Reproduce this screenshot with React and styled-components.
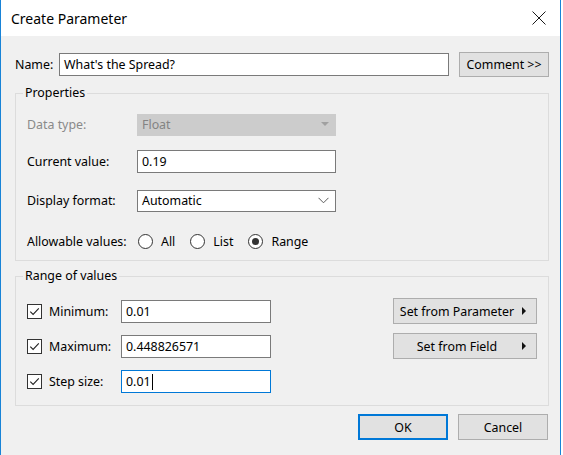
import React from "react"
import styled, { createGlobalStyle } from "styled-components"

const Global = createGlobalStyle`
  html, body { margin: 0; padding: 0; background: #ffffff; }
  body { font-family: "Noto Sans", "Open Sans", sans-serif; font-size: 12.4px; color: #000; }
  * { box-sizing: border-box; }
`

export default function App() {
  return (
    <>
      <Global />
      <Window>
        <TitleBar>
          <Title>Create Parameter</Title>
          <CloseBtn>
            <svg width="16" height="16" viewBox="0 0 16 16">
              <path d="M1.5 1.5 L14.5 14.5 M14.5 1.5 L1.5 14.5" stroke="#1a1a1a" strokeWidth="1" fill="none" />
            </svg>
          </CloseBtn>
        </TitleBar>

        <Body>
          <NameRow>
            <NameLabel>Name:</NameLabel>
            <TextBox $width={390}>What's the Spread?</TextBox>
            <Button $width={90} $height={25}>Comment &gt;&gt;</Button>
          </NameRow>

          <Group $pt={12} $pb={7}>
            <Legend>Properties</Legend>
            <FieldRow>
              <FieldLabel $disabled>Data type:</FieldLabel>
              <Select $disabled>
                Float
                <svg width="8" height="5" viewBox="0 0 8 5">
                  <path d="M0 0 L8 0 L4 4 Z" fill="#a0a0a0" />
                </svg>
              </Select>
            </FieldRow>
            <FieldRow $mt={14}>
              <FieldLabel>Current value:</FieldLabel>
              <TextBox $width={199}>0.19</TextBox>
            </FieldRow>
            <FieldRow $mt={16}>
              <FieldLabel>Display format:</FieldLabel>
              <Select>
                Automatic
                <svg width="11" height="7" viewBox="0 0 11 7">
                  <path d="M0.5 0.8 L5.5 5.8 L10.5 0.8" stroke="#5a5a5a" strokeWidth="1" fill="none" />
                </svg>
              </Select>
            </FieldRow>
            <FieldRow $mt={18}>
              <FieldLabel>Allowable values:</FieldLabel>
              <Radios>
                <RadioItem><Radio /> All</RadioItem>
                <RadioItem><Radio /> List</RadioItem>
                <RadioItem><Radio $checked /> Range</RadioItem>
              </Radios>
            </FieldRow>
          </Group>

          <Group $pt={16} $pb={12} $mt={7}>
            <Legend>Range of values</Legend>
            <RangeBody>
              <RangeRows>
                <CheckRow>
                  <CheckBox />
                  <CheckLabel>Minimum:</CheckLabel>
                  <TextBox $width={150}>0.01</TextBox>
                </CheckRow>
                <CheckRow>
                  <CheckBox />
                  <CheckLabel>Maximum:</CheckLabel>
                  <TextBox $width={150}>0.448826571</TextBox>
                </CheckRow>
                <CheckRow>
                  <CheckBox />
                  <CheckLabel>Step size:</CheckLabel>
                  <TextBox $width={150} $focused>0.01<Caret /></TextBox>
                </CheckRow>
              </RangeRows>
              <SideButtons>
                <MenuButton>Set from Parameter<Arrow /></MenuButton>
                <MenuButton>Set from Field<Arrow /></MenuButton>
              </SideButtons>
            </RangeBody>
          </Group>

          <Footer>
            <Button $width={90} $height={26} $default>OK</Button>
            <Button $width={90} $height={26}>Cancel</Button>
          </Footer>
        </Body>
      </Window>
    </>
  )
}

function CheckBox() {
  return (
    <Check>
      <svg width="13" height="13" viewBox="0 0 13 13">
        <path d="M2.3 6.6 L5.1 9.4 L10.8 3.4" stroke="#222" strokeWidth="1.1" fill="none" />
      </svg>
    </Check>
  )
}

function Arrow() {
  return (
    <ArrowIcon width="5" height="8" viewBox="0 0 5 8">
      <path d="M0 0 L4 4 L0 8 Z" fill="#111" />
    </ArrowIcon>
  )
}

const Window = styled.div`
  width: 561px;
  height: 455px;
  border-left: 1px solid #1883d7;
  border-right: 1px solid #1883d7;
  display: flex;
  flex-direction: column;
  overflow: hidden;
`

const TitleBar = styled.div`
  height: 36px;
  flex-shrink: 0;
  background: #ffffff;
  display: flex;
  align-items: center;
  justify-content: space-between;
  padding: 0 11px 0 10px;
`

const Title = styled.div`
  font-size: 14px;
  color: #000;
`

const CloseBtn = styled.div`
  width: 16px;
  height: 16px;
  display: flex;
  margin-right: 2px;
`

const Body = styled.div`
  flex: 1;
  background: #f0f0f0;
  padding: 16px 11px 0 14px;
  display: flex;
  flex-direction: column;
`

const NameRow = styled.div`
  display: flex;
  align-items: center;
  height: 25px;
`

const NameLabel = styled.div`
  width: 44px;
`

const TextBox = styled.div`
  width: ${p => p.$width}px;
  height: 23px;
  background: #ffffff;
  border: 1px solid ${p => (p.$focused ? "#0078d7" : "#7a7a7a")};
  padding: 0 4px;
  display: flex;
  align-items: center;
  white-space: nowrap;
  flex-shrink: 0;
`

const Caret = styled.span`
  display: inline-block;
  width: 1px;
  height: 16px;
  background: #000;
  margin-left: 1px;
`

const Button = styled.div`
  width: ${p => p.$width}px;
  height: ${p => p.$height}px;
  background: #e1e1e1;
  border: ${p => (p.$default ? "2px solid #0078d7" : "1px solid #adadad")};
  display: flex;
  align-items: center;
  justify-content: center;
  flex-shrink: 0;
  margin-left: auto;
`

const Group = styled.fieldset`
  margin: ${p => p.$mt || 8}px 0 0 0;
  padding: ${p => p.$pt}px 11px ${p => p.$pb}px 11px;
  border: 1px solid #dcdcdc;
  width: 534px;
  min-inline-size: 0;
`

const Legend = styled.legend`
  padding: 0 2px;
  margin-left: -4px;
  line-height: 16px;
  font-size: 12.4px;
`

const FieldRow = styled.div`
  display: flex;
  align-items: center;
  height: 23px;
  margin-top: ${p => p.$mt || 0}px;
`

const FieldLabel = styled.div`
  width: 110px;
  color: ${p => (p.$disabled ? "#8a8a8a" : "#000")};
`

const Select = styled.div`
  width: 199px;
  height: 22px;
  background: ${p => (p.$disabled ? "#cccccc" : "#ffffff")};
  border: 1px solid ${p => (p.$disabled ? "#cccccc" : "#7a7a7a")};
  color: ${p => (p.$disabled ? "#838383" : "#000")};
  display: flex;
  align-items: center;
  justify-content: space-between;
  padding: 0 6px 0 4px;
`

const Radios = styled.div`
  display: flex;
  align-items: center;
  gap: 14px;
`

const RadioItem = styled.div`
  display: flex;
  align-items: center;
  gap: 8px;
  margin-left: 1px;
`

const Radio = styled.span`
  width: 15px;
  height: 15px;
  border-radius: 50%;
  border: 1px solid #333;
  background: #fff;
  display: flex;
  align-items: center;
  justify-content: center;
  &::after {
    content: "";
    display: ${p => (p.$checked ? "block" : "none")};
    width: 7px;
    height: 7px;
    border-radius: 50%;
    background: #333;
  }
`

const RangeBody = styled.div`
  display: flex;
  justify-content: space-between;
  align-items: flex-start;
`

const RangeRows = styled.div`
  display: flex;
  flex-direction: column;
  gap: 12px;
`

const CheckRow = styled.div`
  display: flex;
  align-items: center;
  height: 23px;
`

const Check = styled.span`
  width: 15px;
  height: 15px;
  border: 1px solid #333;
  background: #fff;
  display: flex;
  align-items: center;
  justify-content: center;
`

const CheckLabel = styled.div`
  width: 72px;
  margin-left: 7px;
`

const SideButtons = styled.div`
  display: flex;
  flex-direction: column;
  gap: 9px;
  margin-top: -2px;
`

const MenuButton = styled.div`
  position: relative;
  width: 144px;
  height: 26px;
  background: #e1e1e1;
  border: 1px solid #adadad;
  display: flex;
  align-items: center;
  justify-content: center;
  padding-right: 16px;
`

const ArrowIcon = styled.svg`
  position: absolute;
  right: 9px;
  top: 8px;
`

const Footer = styled.div`
  display: flex;
  justify-content: flex-end;
  gap: 10px;
  margin-top: 8px;
  padding-right: 1px;
  & > div { margin-left: 0; }
`
